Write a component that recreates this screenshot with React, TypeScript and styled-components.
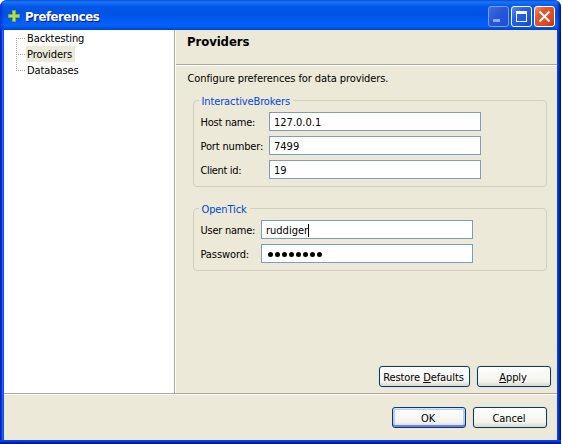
import React from "react";
import styled, { createGlobalStyle } from "styled-components";

const Global = createGlobalStyle`
  * { box-sizing: border-box; }
  html, body { margin: 0; background: #fff; overflow: hidden; }
  body { font-family: "DejaVu Sans Condensed", "DejaVu Sans", sans-serif; font-stretch: condensed; font-size: 11px; line-height: 14px; color: #000; }
`;

const Window = styled.div`
  width: 561px;
  height: 444px;
  display: flex;
  flex-direction: column;
  border-radius: 7px 7px 0 0;
  overflow: hidden;
  background: #0046e0;
`;

const TitleBar = styled.header`
  height: 30px;
  flex: none;
  display: flex;
  align-items: center;
  padding: 2px 6px 0 8px;
  background:
    linear-gradient(to right, #0831d9, transparent) left / 4px 100% no-repeat,
    linear-gradient(to left, #00138c, transparent) right / 4px 100% no-repeat,
    linear-gradient(#0a4bd0 0, #1a74f5 2px, #0c66f0 4px, #0056e6 7px, #0053e2 14px, #005cf4 21px, #0062fb 26px, #0050dc 28px, #0041c8 30px);
`;

const Title = styled.h1`
  margin: 0 auto 0 5px;
  padding-top: 2px;
  font: bold 13px/16px "DejaVu Sans Condensed", "DejaVu Sans", sans-serif;
  font-stretch: condensed;
  letter-spacing: -0.45px;
  color: #fff;
  text-shadow: 1px 1px 0 #0a1883;
`;

const Controls = styled.div`
  display: flex;
  gap: 2px;
`;

const ControlButton = styled.button<{ $kind: "min" | "max" | "close" }>`
  width: 21px;
  height: 21px;
  padding: 0;
  border: 1px solid ${(p) => (p.$kind === "min" ? "#7e9df0" : "#fff")};
  border-radius: 3px;
  background: ${(p) =>
    p.$kind === "close"
      ? "linear-gradient(135deg, #ee9474, #e2582f 30%, #dc481e 75%, #bc3410)"
      : p.$kind === "min"
        ? "linear-gradient(135deg, #3f6ce0, #2456d8 50%, #1d50d6)"
        : "linear-gradient(135deg, #5f8bf0, #2a60e4 35%, #1c55e2 75%, #1246c0)"};
  svg { display: block; }
`;

const Frame = styled.main`
  flex: 1;
  display: flex;
  flex-direction: column;
  padding: 0 4px 4px;
  background:
    linear-gradient(#0046e6 0 1px, #0040dc 1px 2px, #0020b0 2px 3px, #00138c 3px) bottom / 100% 4px no-repeat,
    linear-gradient(to right, #0019cf 0 1px, #0831d9 1px 2px, #166aee 2px 3px, #0855dd 3px 4px, #0046e0 4px 558px, #0038d0 558px 559px, #001ea0 559px 560px, #00138c 560px);
`;

const Body = styled.div`
  height: 363px;
  flex: none;
  display: flex;
  background: #ece9d8;
`;

const Tree = styled.nav`
  width: 170px;
  background: #fff;
  padding-left: 12px;
`;

const TreeItem = styled.div<{ $selected?: boolean; $edge?: "first" | "last" }>`
  height: 16px;
  display: flex;
  align-items: center;
  letter-spacing: -0.1px;
  background:
    linear-gradient(#fff, #fff) 0 ${(p) => (p.$edge === "last" ? "9px" : p.$edge === "first" ? "-8px" : "-16px")} / 2px 16px no-repeat,
    repeating-linear-gradient(#aca899 0 1px, transparent 1px 2px) 0 0 / 1px 16px no-repeat,
    repeating-linear-gradient(to right, #aca899 0 1px, transparent 1px 2px) 0 8px / 9px 1px no-repeat;
  span {
    height: 16px;
    margin-left: 10px;
    padding: 1px 3px 0 1px;
    line-height: 15px;
    background: ${(p) => (p.$selected ? "#ece9d8" : "transparent")};
  }
`;

const Sash = styled.div`
  width: 2px;
  background: linear-gradient(to right, #aca899 50%, #fff 50%);
`;

const Page = styled.section`
  flex: 1;
  display: flex;
  flex-direction: column;
`;

const PageTitle = styled.h2`
  margin: 0;
  height: 34px;
  padding: 3px 0 0 11px;
  font: bold 13px/17px "DejaVu Sans Condensed", "DejaVu Sans", sans-serif;
  font-stretch: condensed;
  letter-spacing: -0.08px;
`;

const Rule = styled.div`
  height: 2px;
  flex: none;
  background: linear-gradient(#aca899 50%, #fff 50%);
`;

const Intro = styled.p`
  margin: 5px 0 0 11.5px;
  height: 16px;
  line-height: 16px;
  letter-spacing: -0.09px;
`;

const Group = styled.section<{ $height: number; $gap: number }>`
  width: 354px;
  height: ${(p) => p.$height}px;
  margin: ${(p) => p.$gap}px 0 0 17px;
  border: 1px solid #d0d0bf;
  border-radius: 4px;
  padding: 0 0 0 6.5px;
`;

const Legend = styled.h3`
  width: max-content;
  height: 14px;
  margin: -7px 0 4px -2px;
  padding: 0 3px;
  font: inherit;
  line-height: 15px;
  letter-spacing: -0.12px;
  color: #0046d5;
  background: #ece9d8;
`;

const Field = styled.label<{ $label: number }>`
  height: 19px;
  margin-bottom: 5px;
  display: grid;
  grid-template-columns: ${(p) => p.$label + 0.5}px 212px;
  align-items: center;
  white-space: nowrap;
  line-height: 16px;
`;

const Caption = styled.span<{ $spacing?: number }>`
  padding-top: 2px;
  letter-spacing: ${(p) => p.$spacing ?? -0.25}px;
`;

const Entry = styled.span`
  height: 19px;
  display: flex;
  align-items: center;
  padding: 2px 0 0 4px;
  border: 1px solid #7f9db9;
  background: #fff;
`;

const Caret = styled.i`
  width: 1px;
  height: 13px;
  margin-top: -1px;
  background: #000;
`;

const Dots = styled.span`
  display: flex;
  gap: 2px;
  padding-left: 1.5px;
  i { width: 5px; height: 5px; border-radius: 50%; background: #000; }
`;

const Actions = styled.div<{ $footer?: boolean }>`
  display: flex;
  justify-content: flex-end;
  gap: 7px;
  margin-top: ${(p) => (p.$footer ? 0 : "auto")};
  padding: ${(p) => (p.$footer ? "12px 10px 0 0" : "0 6px 6px 0")};
`;

const PushButton = styled.button<{ $w: number; $default?: boolean }>`
  width: ${(p) => p.$w}px;
  height: 21px;
  padding: 2px 2px 0 0;
  border: 1px solid #003c74;
  border-radius: 3px;
  font: inherit;
  line-height: 18px;
  letter-spacing: -0.08px;
  color: #000;
  background: linear-gradient(#fff, #f4f3ee 75%, #dcd6c8);
  box-shadow: ${(p) => (p.$default ? "inset 0 1px 0 #cee7ff, inset 0 -2px 0 #6982ee, inset 0 0 0 2px #b5cdf5" : "0 0 0 1px #e6e2d0")};
`;

const Footer = styled.footer`
  flex: 1;
  background: #ece9d8;
`;

export default function App() {
  return (
    <>
      <Global />
      <Window>
        <TitleBar>
          <svg width="12" height="12" viewBox="0 0 12 12"><path d="M4.5.5h3v4h4v3h-4v4h-3v-4h-4v-3h4z" fill="#b4de58" stroke="#75b043" /></svg>
          <Title>Preferences</Title>
          <Controls>
            <ControlButton $kind="min"><svg width="19" height="19"><path d="M4 12h7v3H4z" fill="#8da8ee" /></svg></ControlButton>
            <ControlButton $kind="max"><svg width="19" height="19"><path d="M4 4h11v11H4zM5 7v7h9V7z" fillRule="evenodd" fill="#fff" /></svg></ControlButton>
            <ControlButton $kind="close"><svg width="19" height="19"><path d="M4.5 4.5l10 10M14.5 4.5l-10 10" stroke="#fff" strokeWidth="2" /></svg></ControlButton>
          </Controls>
        </TitleBar>
        <Frame>
          <Body>
            <Tree>
              <TreeItem $edge="first"><span>Backtesting</span></TreeItem>
              <TreeItem $selected><span>Providers</span></TreeItem>
              <TreeItem $edge="last"><span>Databases</span></TreeItem>
            </Tree>
            <Sash />
            <Page>
              <PageTitle>Providers</PageTitle>
              <Rule />
              <Intro>Configure preferences for data providers.</Intro>
              <Group $height={87} $gap={13}>
                <Legend>InteractiveBrokers</Legend>
                <Field $label={68}><Caption>Host name:</Caption><Entry>127.0.0.1</Entry></Field>
                <Field $label={68}><Caption $spacing={-0.15}>Port number:</Caption><Entry>7499</Entry></Field>
                <Field $label={68}><Caption $spacing={-0.35}>Client id:</Caption><Entry>19</Entry></Field>
              </Group>
              <Group $height={63} $gap={21}>
                <Legend>OpenTick</Legend>
                <Field $label={60}><Caption $spacing={-0.25}>User name:</Caption><Entry>ruddiger<Caret /></Entry></Field>
                <Field $label={60}><Caption $spacing={-0.1}>Password:</Caption><Entry><Dots>{Array.from({ length: 8 }, (_, i) => <i key={i} />)}</Dots></Entry></Field>
              </Group>
              <Actions>
                <PushButton $w={91}>Restore <u>D</u>efaults</PushButton>
                <PushButton $w={74}><u>A</u>pply</PushButton>
              </Actions>
            </Page>
          </Body>
          <Rule />
          <Footer>
            <Actions $footer>
              <PushButton $w={74} $default>OK</PushButton>
              <PushButton $w={74}>Cancel</PushButton>
            </Actions>
          </Footer>
        </Frame>
      </Window>
    </>
  );
}
